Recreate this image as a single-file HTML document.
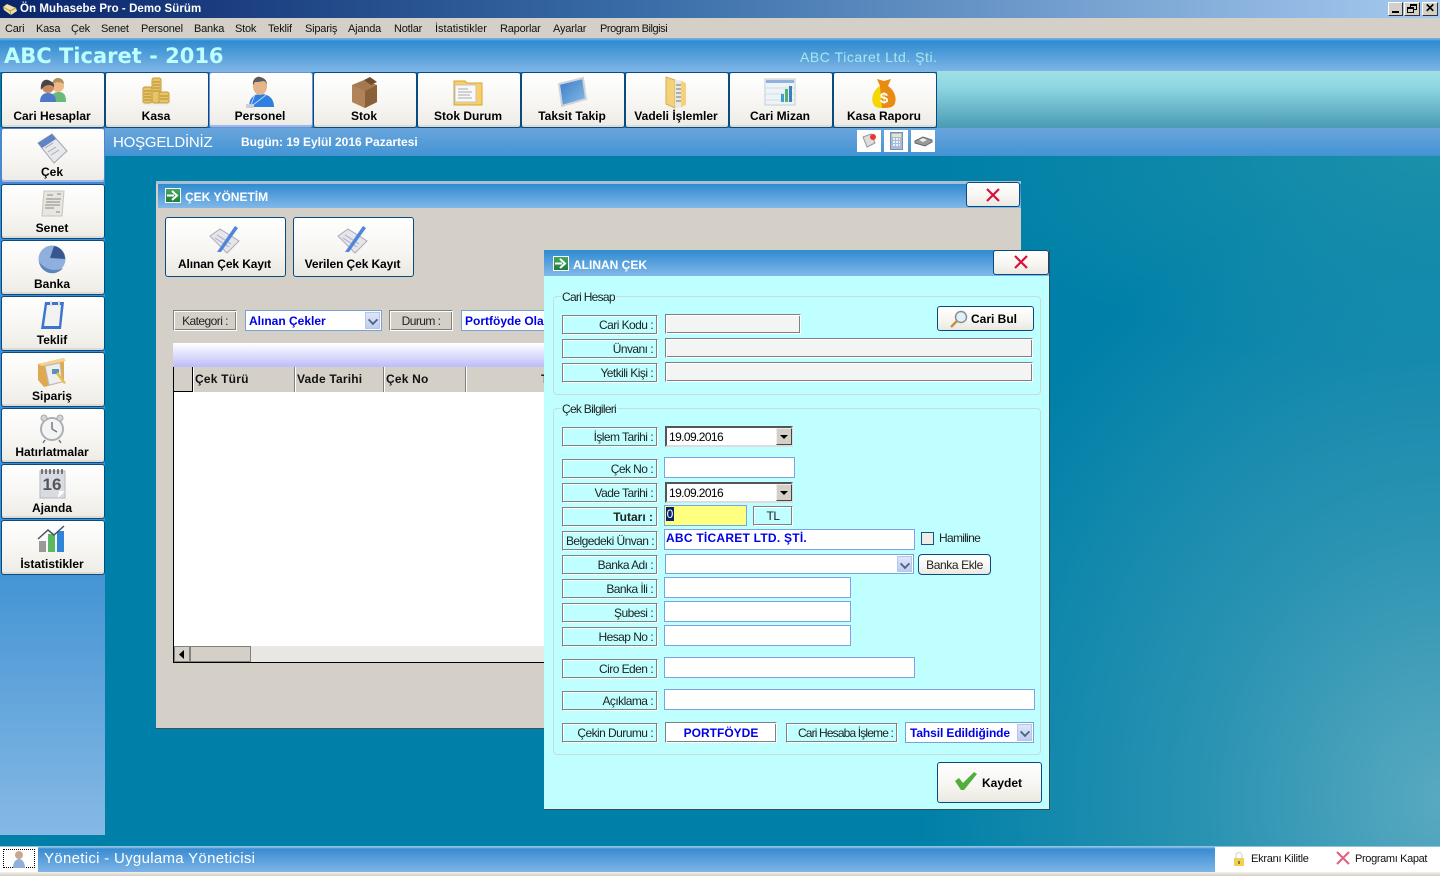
<!DOCTYPE html>
<html lang="tr"><head><meta charset="utf-8"><title>Ön Muhasebe Pro</title>
<style>
*{box-sizing:border-box}
html,body{margin:0;padding:0;width:1440px;height:876px;overflow:hidden}
body{position:relative;font:12px/14px "Liberation Sans",sans-serif;color:#000;background:#0080a8}
div,span.a,svg{position:absolute}
.bg{left:0;top:0;width:1440px;height:876px;background:radial-gradient(ellipse 520px 620px at 1440px 800px,#58a9c0 0%,#2a93b2 45%,rgba(0,128,168,0) 100%),radial-gradient(ellipse 500px 200px at 1440px 160px,#1c90aa 0%,rgba(0,128,168,0) 100%),#0080a8}
.menu span{position:absolute;top:4px;font-size:11px;line-height:14px;letter-spacing:-.2px;color:#111}
.tb{width:104px;height:56px;border:1px solid #0a4a80;border-radius:3px;background:linear-gradient(#fff,#f6f5f1 60%,#ecebe4);box-shadow:inset 0 -2px 0 #dedcd2}
.tb b{position:absolute;left:0;right:2px;text-align:center;top:36px;font-size:12px;line-height:14px}
.tb svg{left:34px;top:3px}
.lb{left:562px;width:96px;height:20px;border:1px solid;border-color:#808080 #fff #fff #808080;box-shadow:inset -1px -1px 0 #808080,inset 1px 1px 0 #fff;font-size:12px;line-height:18px;text-align:right;padding-right:4px;letter-spacing:-.55px;color:#222;white-space:nowrap}
.in{background:#fff;border:1px solid #7ba2e7;height:21px}
.sk{background:#f4f4f4;border:1px solid;border-color:#808080 #fff #fff #808080;box-shadow:inset 1px 1px 0 #fff,inset -1px -1px 0 #808080;height:20px}
.dt{left:665px;width:128px;height:21px;background:#fff;border:2px solid;border-color:#555 #ddd #ddd #555;font-size:12px;line-height:19px;padding-left:2px;letter-spacing:-.6px}
.dt i{position:absolute;right:-1px;top:0;width:16px;height:17px;background:#d4d0c8;border:1px solid;border-color:#eee #444 #444 #eee}
.dt i:after{content:"";position:absolute;left:3px;top:6px;border:4px solid transparent;border-top:4px solid #000;border-bottom:0}
.cb{width:15px;background:linear-gradient(#dfe6f7,#bfcdee);border:1px solid #b6c6e8;top:1px;bottom:1px;right:1px}
.cb:after{content:"";position:absolute;left:3px;top:3px;width:6px;height:6px;border:solid #4d6185;border-width:0 2px 2px 0;transform:rotate(45deg) scale(.9)}
.gp{left:553px;width:488px;border:1px solid #c8dcdc;border-radius:4px}
.lg{background:#bfffff;left:561px;font-size:12px;line-height:14px;padding:0 1px;letter-spacing:-.72px;color:#222}
.btn{border:1px solid #0a4a80;border-radius:3px;background:linear-gradient(#fff,#f6f5f1 60%,#e9e8e0)}
.blue{color:#0000e6;font-weight:bold}
.hd{top:367px;height:25px;background:#d4d0c8;border-right:1px solid #808080;border-left:1px solid #fff;font-weight:bold;font-size:12px;line-height:24px;padding-left:1px;white-space:nowrap;color:#111;letter-spacing:.2px}
.grn{width:16px;height:15px;background:linear-gradient(#43a85c,#1d7f3a);border:1px solid #fff;color:#fff}
.wt{color:#fff;font-weight:bold;font-size:12px;line-height:15px;white-space:nowrap;letter-spacing:0}
</style></head><body>
<div class="bg"></div>

<!-- title bar -->
<div style="left:0;top:0;width:1440px;height:18px;background:linear-gradient(90deg,#0a246a,#3a6ea8 45%,#a6caf0 100%)"></div>
<svg style="left:2px;top:2px" width="16" height="14" viewBox="0 0 16 14"><path d="M1 5 5 2l9 4 1 3-6 4-7-5z" fill="#efe3a8"/><path d="M1 5l7 4 1 4M8 9l6-3" stroke="#b89a45" fill="none"/></svg>
<div style="left:20px;top:2px;color:#fff;font-weight:bold;font-size:11.5px;line-height:15px;white-space:nowrap;letter-spacing:.06px">Ön Muhasebe Pro - Demo Sürüm</div>
<div style="left:1388px;top:2px;width:15px;height:14px;background:#d4d0c8;border:1px solid;border-color:#fff #333 #333 #fff"><div style="left:3px;bottom:2px;width:7px;height:2px;background:#000"></div></div>
<div style="left:1404px;top:2px;width:16px;height:14px;background:#d4d0c8;border:1px solid;border-color:#fff #333 #333 #fff"><div style="left:5px;top:1px;width:7px;height:6px;border:1px solid #000;border-top-width:2px"></div><div style="left:2px;top:4px;width:7px;height:6px;border:1px solid #000;border-top-width:2px;background:#d4d0c8"></div></div>
<div style="left:1422px;top:2px;width:16px;height:14px;background:#d4d0c8;border:1px solid;border-color:#fff #333 #333 #fff;font:bold 12px/11px 'Liberation Sans',sans-serif;text-align:center">✕</div>

<!-- menu -->
<div class="menu" style="left:0;top:18px;width:1440px;height:20px;background:#d4d0c8">
<span style="left:5px">Cari</span><span style="left:36px">Kasa</span><span style="left:71px">Çek</span><span style="left:101px">Senet</span><span style="left:141px">Personel</span><span style="left:194px">Banka</span><span style="left:235px">Stok</span><span style="left:268px">Teklif</span><span style="left:305px">Sipariş</span><span style="left:348px">Ajanda</span><span style="left:394px">Notlar</span><span style="left:435px;letter-spacing:0">İstatistikler</span><span style="left:500px">Raporlar</span><span style="left:553px">Ayarlar</span><span style="left:600px;letter-spacing:-.45px">Program Bilgisi</span>
</div>

<!-- header -->
<div style="left:0;top:38px;width:1440px;height:34px;background:linear-gradient(#6fb0e0 0,#6fb0e0 1px,#2f8bd0 3px,#80b6e6 100%)"></div>
<div style="left:4px;top:43px;color:#bdffff;font:bold 21px/27px 'DejaVu Sans','Liberation Sans',sans-serif;white-space:nowrap">ABC Ticaret - 2016</div>
<div style="left:800px;top:49px;color:#a8e8ee;font-size:14px;line-height:16px;white-space:nowrap;letter-spacing:.55px">ABC Ticaret Ltd. Şti.</div>
<div style="left:937px;top:71px;width:503px;height:57px;background:linear-gradient(#a2dfe6,#8cd6e2 30%,#4b9ab4 100%)"></div>

<!-- sidebar + welcome -->
<div style="left:0;top:127px;width:105px;height:708px;background:linear-gradient(#3b8fd2 0,#3b8fd2 58%,#86b9e4 100%)"></div>
<div style="left:105px;top:128px;width:1335px;height:28px;background:linear-gradient(#69a5dc,#4394d4)"></div>
<div style="left:113px;top:134px;color:#fff;font-size:15px;line-height:18px;white-space:nowrap;letter-spacing:-.2px">HOŞGELDİNİZ</div>
<div style="left:241px;top:135px;color:#fff;font-weight:bold;font-size:12px;line-height:15px;white-space:nowrap">Bugün: 19 Eylül 2016 Pazartesi</div>
<div style="left:857px;top:130px;width:24px;height:22px;background:#fff"><svg style="left:5px;top:3px" width="16" height="16" viewBox="0 0 16 16"><path d="M1 4 9 1l4 9-8 4z" fill="#ddd" stroke="#999"/><circle cx="11" cy="4" r="3" fill="#e33"/></svg></div>
<div style="left:884px;top:130px;width:24px;height:22px;background:#fff"><svg style="left:6px;top:2px" width="13" height="18" viewBox="0 0 13 18"><rect x=".5" y=".5" width="12" height="17" fill="#a9bcd6" stroke="#7890ad"/><rect x="2" y="2" width="9" height="3" fill="#dfe9c8"/><path d="M3 7h7M3 10h7M3 13h7" stroke="#eef" stroke-width="2" stroke-dasharray="2 1"/></svg></div>
<div style="left:911px;top:130px;width:24px;height:22px;background:#fff"><svg style="left:3px;top:6px" width="19" height="11" viewBox="0 0 19 11"><path d="M1 5 9 1l9 3v2l-7 4-10-3z" fill="#999" stroke="#666"/><path d="M5 4l4-2 4 2-4 2z" fill="#eee"/></svg></div>

<!-- top buttons -->
<div class="tb" style="left:1px;top:72px"><b>Cari Hesaplar</b><svg width="32" height="32" viewBox="0 0 32 32"><circle cx="22" cy="10" r="6" fill="#efb985"/><path d="M16 8c1-5 4-6 6-6s6 1 6 6c-3-2-8-3-12 0z" fill="#b09060"/><path d="M15 26c0-8 3-10 8-10s7 3 7 10z" fill="#6ab87a"/><circle cx="12" cy="11" r="6" fill="#c98a62"/><path d="M5 14C4 5 9 3 12 4s7 3 6 7c-3-3-9-3-13 3z" fill="#4b4444"/><path d="M4 26c0-7 4-9 8-9s8 2 8 9z" fill="#5078c8"/></svg></div>
<div class="tb" style="left:105px;top:72px"><b>Kasa</b><svg width="32" height="32" viewBox="0 0 32 32"><ellipse cx="16" cy="27" rx="15" ry="3" fill="#eee"/><g fill="#e6c468" stroke="#c49a3c"><rect x="3" y="11" width="9" height="16" rx="2"/><rect x="12" y="2" width="9" height="25" rx="2"/><rect x="19" y="16" width="10" height="11" rx="2"/></g><path d="M4 15h7M4 18h7M4 21h7M4 24h7M13 6h7M13 9h7M13 12h7M13 15h7M20 20h8M20 23h8" stroke="#b88c30"/></svg></div>
<div class="tb" style="left:209px;top:72px;border-color:#6c8fd8;box-shadow:inset 0 -2px 0 #9db8ea"><b>Personel</b><svg width="32" height="34" viewBox="0 0 32 34"><path d="M5 31c0-9 5-13 12-13s13 4 13 13z" fill="#2f7fe0"/><ellipse cx="16" cy="10" rx="7" ry="9" fill="#e4b48a"/><path d="M9 9c-1-6 4-9 7-8s7 2 7 8c-1-3-2-4-4-4-3 1-7 1-8 1z" fill="#5a5a5a"/><path d="M11 18l-4 11M22 19l-13 10" stroke="#b9d4f5"/><rect x="2" y="28" width="8" height="4" fill="#ccd"/></svg></div>
<div class="tb" style="left:313px;top:72px"><b>Stok</b><svg width="32" height="34" viewBox="0 0 32 34"><path d="M4 9 16 4l13 5v17l-12 6-13-6z" fill="#a5784f"/><path d="M17 15l12-6v17l-12 6z" fill="#8a6038"/><path d="M4 9l13 6v17L4 26z" fill="#b08458"/><path d="M16 4l6-3 7 5-6 3z" fill="#6f4d2e"/></svg></div>
<div class="tb" style="left:417px;top:72px"><b>Stok Durum</b><svg width="32" height="32" viewBox="0 0 32 32"><path d="M2 5h11l2 2h15v22H2z" fill="#f7cf62" stroke="#d3a63a"/><rect x="3" y="9" width="21" height="17" fill="#f8f8f8" stroke="#c5c5c5"/><path d="M6 13h10M6 16h14M6 19h12M6 22h14" stroke="#aaa"/></svg></div>
<div class="tb" style="left:521px;top:72px"><b>Taksit Takip</b><svg width="32" height="32" viewBox="0 0 32 32"><defs><linearGradient id="tk" x1="0" y1="0" x2="1" y2="1"><stop offset="0" stop-color="#3c78c8"/><stop offset="1" stop-color="#86c0e4"/></linearGradient></defs><path d="M3 8 27 2l3 21-24 7z" fill="url(#tk)" stroke="#cfd4da" stroke-width="2"/></svg></div>
<div class="tb" style="left:625px;top:72px"><b>Vadeli İşlemler</b><svg width="32" height="34" viewBox="0 0 32 34"><path d="M6 1l9 3v28L6 28z" fill="#f3d27a" stroke="#d4ae52"/><path d="M15 4l8 1v26l-8 1z" fill="#e8e8e8"/><path d="M21 5l5 2v22l-5 2z" fill="#f3d27a"/><path d="M16 9h5M16 13h5M16 17h5M16 21h5M16 25h5" stroke="#999" stroke-width="1.500"/></svg></div>
<div class="tb" style="left:729px;top:72px"><b>Cari Mizan</b><svg width="32" height="32" viewBox="0 0 32 32"><rect x="1" y="3" width="30" height="26" fill="#eef3f8" stroke="#c5ccd4"/><rect x="2" y="4" width="28" height="3" fill="#8fb3de"/><path d="M2 12h28M2 18h28M2 24h28" stroke="#d0dcea"/><rect x="17" y="18" width="3" height="8" fill="#3e9ed0"/><rect x="21" y="13" width="3" height="13" fill="#50b070"/><rect x="25" y="10" width="3" height="16" fill="#3a7fc0"/></svg></div>
<div class="tb" style="left:833px;top:72px"><b>Kasa Raporu</b><svg style="left:36px;top:3px" width="28" height="34" viewBox="0 0 28 34"><path d="M7 3l7 2 7-2-3 7c6 4 9 11 7 17-1 4-5 5-11 5S4 31 3 27c-2-6 1-13 7-17z" fill="#e88b10"/><path d="M3 27c-2-6 1-13 7-17l2 22C7 32 4 31 3 27z" fill="#f5d800"/><text x="14" y="27" font-family="Liberation Sans,sans-serif" font-weight="bold" font-size="15" fill="#fff" text-anchor="middle">$</text></svg></div>

<!-- side buttons -->
<div class="tb" style="left:1px;top:128px;height:55px;border-color:#5a80cc;box-shadow:inset 0 -2px 0 #9db8ea"><b style="top:36px">Çek</b><svg width="32" height="34" viewBox="0 0 32 34"><path d="M2 11 16 2l15 17-13 12z" fill="#e6e8ee" stroke="#a0a6b0"/><path d="M2 11 16 2l4 5-14 9z" fill="#5f83c4"/><path d="M9 16l8-5M12 20l8-5M15 23l8-5" stroke="#aaa"/></svg></div>
<div class="tb" style="left:1px;top:184px;height:55px"><b style="top:36px">Senet</b><svg width="32" height="32" viewBox="0 0 32 32"><path d="M8 3h20l-2 25H6z" fill="#e8e6de" stroke="#c4c4c0"/><path d="M11 7h6M21 6h4M10 11h15M10 14h14M9 17h15M9 20h9M20 24h4" stroke="#888"/></svg></div>
<div class="tb" style="left:1px;top:240px;height:55px"><b style="top:36px">Banka</b><svg width="32" height="32" viewBox="0 0 32 32"><circle cx="16" cy="15" r="13.500" fill="#8fb0dc"/><path d="M18 2a13 13 0 0 1 11 13l-15-1z" fill="#39568f"/><path d="M3 18a13.500 13.500 0 0 0 24 6c-8 4-17 2-24-6z" fill="#5f84bd"/></svg></div>
<div class="tb" style="left:1px;top:296px;height:55px"><b style="top:36px">Teklif</b><svg width="32" height="32" viewBox="0 0 32 32"><path d="M9 2h19l-3 27H5z" fill="#3e74cf"/><path d="M11 5h14l-2 21H8z" fill="#f2f2f2"/><rect x="14" y="1" width="2" height="5" fill="#ddd"/><rect x="22" y="1" width="2" height="5" fill="#ddd"/></svg></div>
<div class="tb" style="left:1px;top:352px;height:55px"><b style="top:36px">Sipariş</b><svg width="32" height="32" viewBox="0 0 32 32"><path d="M2 8 28 2v24L8 31 2 24z" fill="#e0a94f"/><path d="M2 8 28 2l2 3-24 5z" fill="#f5d38e"/><path d="M9 10l15-3 2 19-13 3z" fill="#eee" stroke="#bbb"/><path d="M16 13h7v5h-7z" fill="#5d8fb8"/><path d="M22 16l8 11-2 1-8-10z" fill="#e8c040"/></svg></div>
<div class="tb" style="left:1px;top:408px;height:55px"><b style="top:36px">Hatırlatmalar</b><svg width="32" height="32" viewBox="0 0 32 32"><circle cx="16" cy="17" r="11" fill="#f4f4f4" stroke="#aab0b0" stroke-width="2"/><circle cx="8" cy="6" r="3" fill="#d4d4d4" stroke="#aaa"/><circle cx="24" cy="6" r="3" fill="#d4d4d4" stroke="#aaa"/><path d="M16 17V10M16 17l5 3M9 28l-2 3M23 28l2 3" stroke="#778" stroke-width="1.500"/></svg></div>
<div class="tb" style="left:1px;top:464px;height:55px"><b style="top:36px">Ajanda</b><svg width="32" height="32" viewBox="0 0 32 32"><rect x="4" y="3" width="25" height="27" fill="#d8dce2" stroke="#b5b9c0"/><path d="M6 1v5M10 1v5M14 1v5M18 1v5M22 1v5M26 1v5" stroke="#555" stroke-width="1.500"/><path d="M22 30l7-7h-6z" fill="#fff"/><text x="16" y="22" font-family="Liberation Sans,sans-serif" font-weight="bold" font-size="17" fill="#555" text-anchor="middle">16</text></svg></div>
<div class="tb" style="left:1px;top:520px;height:55px"><b style="top:36px">İstatistikler</b><svg width="32" height="32" viewBox="0 0 32 32"><rect x="3" y="17" width="7" height="11" fill="#999"/><rect x="12" y="10" width="7" height="18" fill="#5cb860"/><rect x="21" y="7" width="7" height="21" fill="#2f86d8"/><path d="M2 15 12 6l6 5L28 2" stroke="#456" fill="none" stroke-width="1.500"/></svg></div>

<!-- ÇEK YÖNETİM window -->
<div style="left:156px;top:181px;width:865px;height:548px;background:#d4d0c8;border-bottom:1px solid #40505a"></div>
<div style="left:156px;top:181px;width:865px;height:3px;background:#a8c0d0"></div>
<div style="left:158px;top:184px;width:863px;height:24px;background:linear-gradient(#2f8ad0,#82b8e8)"></div>
<div class="grn" style="left:165px;top:188px"><svg style="left:1px;top:1px" width="12" height="11" viewBox="0 0 12 11"><path d="M0 5.500h7M5 1l5 4.500-5 4.500" stroke="#fff" stroke-width="2" fill="none"/></svg></div>
<div class="wt" style="left:185px;top:190px">ÇEK YÖNETİM</div>
<div class="btn" style="left:966px;top:182px;width:54px;height:25px"><svg style="left:19px;top:5px" width="14" height="14" viewBox="0 0 14 14"><path d="M1 1l12 12M13 1 1 13" stroke="#d8103c" stroke-width="2.200"/></svg></div>

<div class="btn" style="left:165px;top:217px;width:121px;height:60px"><svg style="left:43px;top:6px" width="32" height="30" viewBox="0 0 32 30"><path d="M1 12 11 5l19 12-12 12z" fill="#e4e6ea" stroke="#aab"/><path d="M8 11l14 9M6 14l14 9" stroke="#aac"/><path d="M8 28 26 2l3 2L12 28z" fill="#4f86d8"/></svg><b style="position:absolute;left:0;right:2px;top:39px;text-align:center;letter-spacing:-.1px">Alınan Çek Kayıt</b></div>
<div class="btn" style="left:293px;top:217px;width:121px;height:60px"><svg style="left:43px;top:6px" width="32" height="30" viewBox="0 0 32 30"><path d="M1 12 11 5l19 12-12 12z" fill="#e4e6ea" stroke="#aab"/><path d="M8 11l14 9M6 14l14 9" stroke="#aac"/><path d="M8 28 26 2l3 2L12 28z" fill="#4f86d8"/></svg><b style="position:absolute;left:0;right:2px;top:39px;text-align:center;letter-spacing:-.1px">Verilen Çek Kayıt</b></div>

<div class="lb" style="left:173px;top:310px;width:64px;height:21px;text-align:center;padding:0;line-height:20px;box-shadow:inset 1px 1px 0 #fff,inset -1px -1px 0 #808080">Kategori :</div>
<div class="in" style="left:245px;top:310px;width:137px;border-color:#7ba2d8"><b class="blue" style="position:absolute;left:3px;top:3px;white-space:nowrap">Alınan Çekler</b><div class="cb"></div></div>
<div class="lb" style="left:389px;top:310px;width:64px;height:21px;text-align:center;padding:0;line-height:20px;box-shadow:inset 1px 1px 0 #fff,inset -1px -1px 0 #808080">Durum :</div>
<div class="in" style="left:461px;top:310px;width:120px;overflow:hidden;border-color:#7ba2d8"><b class="blue" style="position:absolute;left:3px;top:3px;white-space:nowrap">Portföyde Olan</b></div>

<div style="left:173px;top:343px;width:400px;height:24px;background:linear-gradient(#fff,#bcbcfa)"></div>
<div style="left:173px;top:367px;width:400px;height:296px;background:#fff;border:solid #000;border-width:0 0 1px 1px"></div>
<div style="left:174px;top:367px;width:19px;height:25px;background:#d4d0c8;border-right:1px solid #000;border-bottom:1px solid #000"></div>
<div class="hd" style="left:193px;width:102px">Çek Türü</div>
<div class="hd" style="left:295px;width:89px">Vade Tarihi</div>
<div class="hd" style="left:384px;width:82px">Çek No</div>
<div class="hd" style="left:466px;width:100px"><span class="a" style="left:74px">T</span></div>
<div style="left:174px;top:646px;width:400px;height:16px;background:#e9e7e3"></div>
<div style="left:174px;top:646px;width:16px;height:16px;background:#d4d0c8;border:1px solid #808080"><svg style="left:4px;top:3px" width="6" height="9"><path d="M5 0v9L0 4.500z"/></svg></div>
<div style="left:190px;top:646px;width:61px;height:16px;background:#d4d0c8;border:1px solid #808080"></div>

<!-- ALINAN ÇEK dialog -->
<div style="left:544px;top:250px;width:506px;height:560px;background:#bfffff;border-right:1px solid #3a4a50;border-bottom:1px solid #3a4a50"></div>
<div style="left:544px;top:250px;width:505px;height:26px;background:linear-gradient(#2f8ad0,#82b8e8)"></div>
<div class="grn" style="left:553px;top:256px"><svg style="left:1px;top:1px" width="12" height="11" viewBox="0 0 12 11"><path d="M0 5.500h7M5 1l5 4.500-5 4.500" stroke="#fff" stroke-width="2" fill="none"/></svg></div>
<div class="wt" style="left:573px;top:258px">ALINAN ÇEK</div>
<div class="btn" style="left:993px;top:250px;width:56px;height:25px"><svg style="left:20px;top:4px" width="14" height="14" viewBox="0 0 14 14"><path d="M1 1l12 12M13 1 1 13" stroke="#d8103c" stroke-width="2.200"/></svg></div>

<div class="gp" style="top:296px;height:99px"></div>
<div class="lg" style="top:290px">Cari Hesap</div>
<div class="gp" style="top:408px;height:347px"></div>
<div class="lg" style="top:402px">Çek Bilgileri</div>

<div class="lb" style="top:315px">Cari Kodu :</div>
<div class="sk" style="left:665px;top:314px;width:136px"></div>
<div class="lb" style="top:339px">Ünvanı :</div>
<div class="sk" style="left:665px;top:338px;width:368px"></div>
<div class="lb" style="top:363px">Yetkili Kişi :</div>
<div class="sk" style="left:665px;top:362px;width:368px"></div>
<div class="btn" style="left:937px;top:306px;width:97px;height:25px"><svg style="left:12px;top:3px" width="18" height="18" viewBox="0 0 18 18"><circle cx="11" cy="7" r="5.500" fill="#dff0f8" stroke="#8a8f95" stroke-width="1.500"/><path d="M7 11 1 17" stroke="#c89040" stroke-width="2.500"/></svg><b style="position:absolute;left:33px;top:5px;white-space:nowrap">Cari Bul</b></div>

<div class="lb" style="top:427px">İşlem Tarihi :</div>
<div class="dt" style="top:426px">19.09.2016<i></i></div>
<div class="lb" style="top:459px">Çek No :</div>
<div class="in" style="left:664px;top:457px;width:131px"></div>
<div class="lb" style="top:483px">Vade Tarihi :</div>
<div class="dt" style="top:482px">19.09.2016<i></i></div>
<div class="lb" style="top:507px;font-weight:bold;letter-spacing:0">Tutarı :</div>
<div class="in" style="left:664px;top:505px;width:83px;background:#ffff80"><span class="a" style="left:1px;top:1px;width:8px;height:14px;background:#0a246a;color:#fff;font-size:12px;line-height:14px;text-align:center">0</span></div>
<div class="lb" style="left:753px;top:506px;width:40px;text-align:center;padding:0">TL</div>
<div class="lb" style="top:531px;padding-right:3px">Belgedeki Ünvan :</div>
<div class="in" style="left:664px;top:529px;width:251px"><b class="blue" style="position:absolute;left:1px;top:1px;white-space:nowrap;letter-spacing:.25px">ABC TİCARET LTD. ŞTİ.</b></div>
<div style="left:921px;top:532px;width:13px;height:13px;background:#eeeee8;border:1px solid #1c5180"></div>
<div style="left:939px;top:531px;white-space:nowrap;letter-spacing:-.7px;color:#222">Hamiline</div>
<div class="lb" style="top:555px">Banka Adı :</div>
<div class="in" style="left:665px;top:554px;width:249px;height:20px;border-color:#7ba2d8"><div class="cb"></div></div>
<div class="btn" style="left:918px;top:554px;width:73px;height:21px;border-radius:4px;text-align:center;line-height:20px;letter-spacing:-.4px;color:#222">Banka Ekle</div>
<div class="lb" style="top:579px">Banka İli :</div>
<div class="in" style="left:664px;top:577px;width:187px"></div>
<div class="lb" style="top:603px">Şubesi :</div>
<div class="in" style="left:664px;top:601px;width:187px"></div>
<div class="lb" style="top:627px">Hesap No :</div>
<div class="in" style="left:664px;top:625px;width:187px"></div>
<div class="lb" style="top:659px">Ciro Eden :</div>
<div class="in" style="left:664px;top:657px;width:251px"></div>
<div class="lb" style="top:691px">Açıklama :</div>
<div class="in" style="left:664px;top:689px;width:371px"></div>
<div class="lb" style="top:723px">Çekin Durumu :</div>
<div class="sk" style="left:665px;top:722px;width:112px;height:21px;background:#fff;text-align:center;line-height:20px"><b class="blue">PORTFÖYDE</b></div>
<div class="lb" style="left:786px;top:723px;width:112px;letter-spacing:-.85px">Cari Hesaba İşleme :</div>
<div class="in" style="left:905px;top:722px;width:129px;border-color:#7ba2d8"><b class="blue" style="position:absolute;left:4px;top:3px;white-space:nowrap;letter-spacing:-.1px">Tahsil Edildiğinde</b><div class="cb"></div></div>
<div class="btn" style="left:937px;top:762px;width:105px;height:41px"><svg style="left:16px;top:8px" width="24" height="20" viewBox="0 0 24 20"><path d="M1 10l4-3 4 5L20 1l3 2L10 19H7z" fill="#4faf3a"/></svg><b style="position:absolute;left:44px;top:13px;white-space:nowrap">Kaydet</b></div>

<!-- status bar -->
<div style="left:0;top:846px;width:1440px;height:26px;background:linear-gradient(#8ec4e0 0,#8ec4e0 1px,#3a8cd2 3px,#7eb5e6 100%)"></div>
<div style="left:0;top:872px;width:1440px;height:4px;background:linear-gradient(#f4f2ea,#d4d0c8)"></div>
<div style="left:0;top:847px;width:38px;height:25px;background:#fff"><div style="left:3px;top:2px;width:32px;height:19px;border:1px dotted #000"></div><svg style="left:12px;top:3px" width="14" height="18" viewBox="0 0 14 18"><circle cx="7" cy="5" r="4" fill="#c9a78e"/><path d="M1 18c0-6 3-9 6-9s6 3 6 9z" fill="#8fb0d8"/></svg></div>
<div style="left:44px;top:851px;color:#fff;font-size:15px;line-height:16px;white-space:nowrap;letter-spacing:.3px">Yönetici - Uygulama Yöneticisi</div>
<div style="left:1215px;top:847px;width:225px;height:25px;background:#fff"></div>
<svg style="left:1233px;top:852px" width="12" height="14" viewBox="0 0 12 14"><path d="M3 6V3.500a3 3 0 0 1 6 0V6" stroke="#ddd" stroke-width="1.500" fill="none"/><rect x="1" y="6" width="10" height="8" fill="#f3d050"/><rect x="5" y="9" width="2" height="3" fill="#876"/></svg>
<div style="left:1251px;top:852px;font-size:11px;white-space:nowrap;letter-spacing:-.25px;color:#111">Ekranı Kilitle</div>
<svg style="left:1336px;top:851px" width="14" height="14" viewBox="0 0 14 14"><path d="M1 1l12 12M13 1 1 13" stroke="#e0607a" stroke-width="2"/></svg>
<div style="left:1355px;top:852px;font-size:11px;white-space:nowrap;letter-spacing:-.35px;color:#111">Programı Kapat</div>
</body></html>
